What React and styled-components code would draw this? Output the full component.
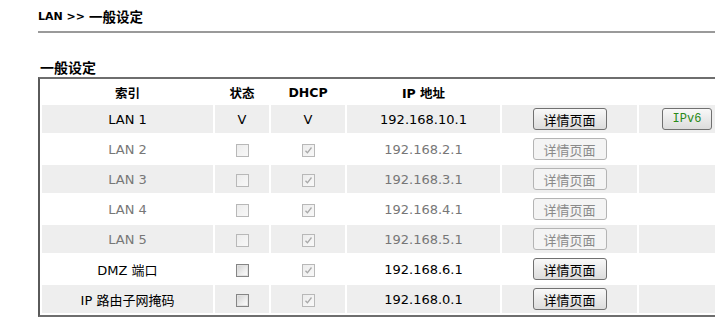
import { styled, createGlobalStyle } from "styled-components";

const rows = [
  { name: "LAN 1", ip: "192.168.10.1", v: true, ipv6: true },
  { name: "LAN 2", ip: "192.168.2.1", muted: true },
  { name: "LAN 3", ip: "192.168.3.1", muted: true },
  { name: "LAN 4", ip: "192.168.4.1", muted: true },
  { name: "LAN 5", ip: "192.168.5.1", muted: true },
  { name: "DMZ 端口", ip: "192.168.6.1", statusEnabled: true },
  { name: "IP 路由子网掩码", ip: "192.168.0.1", statusEnabled: true },
];

export default function App() {
  return (
    <>
      <GlobalStyle />
      <Page>
        <Title>
          LAN &gt;&gt; <Cjk>一般设定</Cjk>
        </Title>
        <Rule />
        <Heading>一般设定</Heading>
        <Table>
          <colgroup>
            <col style={{ width: 171 }} />
            <col style={{ width: 54 }} />
            <col style={{ width: 74 }} />
            <col style={{ width: 153 }} />
            <col style={{ width: 135 }} />
            <col style={{ width: 96 }} />
          </colgroup>
          <thead>
            <tr>
              <Th>索引</Th>
              <Th>状态</Th>
              <Th>DHCP</Th>
              <Th>IP 地址</Th>
              <Th />
              <Th />
            </tr>
          </thead>
          <tbody>
            {rows.map((r, i) => (
              <Row key={r.name} $shaded={i % 2 === 0}>
                <Td $muted={r.muted}>{r.name}</Td>
                <Td>{r.v ? "V" : <Check $enabled={r.statusEnabled} />}</Td>
                <Td>{r.v ? "V" : <Check $checked />}</Td>
                <Td $muted={r.muted}>{r.ip}</Td>
                <Td>
                  <Button disabled={r.muted}>详情页面</Button>
                </Td>
                <Td>{r.ipv6 && <V6Button>IPv6</V6Button>}</Td>
              </Row>
            ))}
          </tbody>
        </Table>
      </Page>
    </>
  );
}

function Check({ $enabled, $checked }) {
  return (
    <CheckBox $enabled={$enabled}>
      {$checked && (
        <svg width="9" height="9" viewBox="0 0 9 9">
          <path d="M1.5 4.8 L3.4 6.8 L7.5 1.5" fill="none" stroke="#a8a8a8" strokeWidth="1.3" />
        </svg>
      )}
    </CheckBox>
  );
}

const GlobalStyle = createGlobalStyle`
  html, body {
    margin: 0;
    overflow: hidden;
    background: #fff;
  }
  body {
    font-family: "DejaVu Sans", "Noto Sans CJK SC", sans-serif;
    font-size: 13px;
    color: #000;
  }
`;

const Page = styled.div`
  width: 760px;
  padding: 9px 0 0 38px;
`;

const Title = styled.div`
  display: flex;
  align-items: center;
  gap: 4px;
  height: 16px;
  font-size: 11px;
  font-weight: bold;
  line-height: 16px;
`;

const Cjk = styled.span`
  font-size: 13.5px;
  line-height: 16px;
`;

const Rule = styled.div`
  margin-top: 6px;
  height: 2px;
  background: #9a9a9a;
`;

const Heading = styled.div`
  height: 16px;
  margin: 27px 0 1px 2px;
  font-size: 14px;
  font-weight: bold;
  line-height: 16px;
`;

const Table = styled.table`
  table-layout: fixed;
  border-collapse: separate;
  border-spacing: 2px;
  border: 2px solid;
  border-color: #6e6e6e #a0a0a0 #6e6e6e #5a5a5a;
`;

const Th = styled.th`
  height: 22px;
  padding: 0;
  font-size: 12.5px;
  font-weight: bold;
  text-align: center;
  vertical-align: middle;
`;

const Row = styled.tr`
  background: ${(p) => (p.$shaded ? "#eeeeee" : "#ffffff")};
`;

const Td = styled.td`
  height: 28px;
  padding: 0;
  text-align: center;
  vertical-align: middle;
  white-space: nowrap;
  color: ${(p) => (p.$muted ? "#777777" : "#000000")};
`;

const CheckBox = styled.span`
  display: inline-flex;
  align-items: center;
  justify-content: center;
  box-sizing: border-box;
  width: 13px;
  height: 13px;
  vertical-align: middle;
  border: 1px solid ${(p) => (p.$enabled ? "#858585" : "#b8b8b8")};
  background: ${(p) =>
    p.$enabled
      ? "linear-gradient(135deg, #cfcfcf 0%, #ececec 55%, #ffffff 100%)"
      : "linear-gradient(135deg, #ececec 0%, #f8f8f8 100%)"};
  box-shadow: ${(p) => (p.$enabled ? "inset 0 0 0 1px #e2e2e2" : "none")};
`;

const Button = styled.button`
  width: 74px;
  height: 22px;
  padding: 0;
  border-radius: 3px;
  font-family: "DejaVu Sans", "Noto Sans CJK SC", sans-serif;
  font-size: 13px;
  vertical-align: middle;
  border: 1px solid #707070;
  color: #000;
  background: linear-gradient(#f8f8f8, #dcdcdc);

  &:disabled {
    border-color: #b4b4b4;
    color: #8a8a8a;
    background: #f4f4f4;
  }
`;

const V6Button = styled(Button)`
  width: 50px;
  font-family: "Liberation Mono", monospace;
  font-size: 12px;
  color: #2a8a1a;
`;
